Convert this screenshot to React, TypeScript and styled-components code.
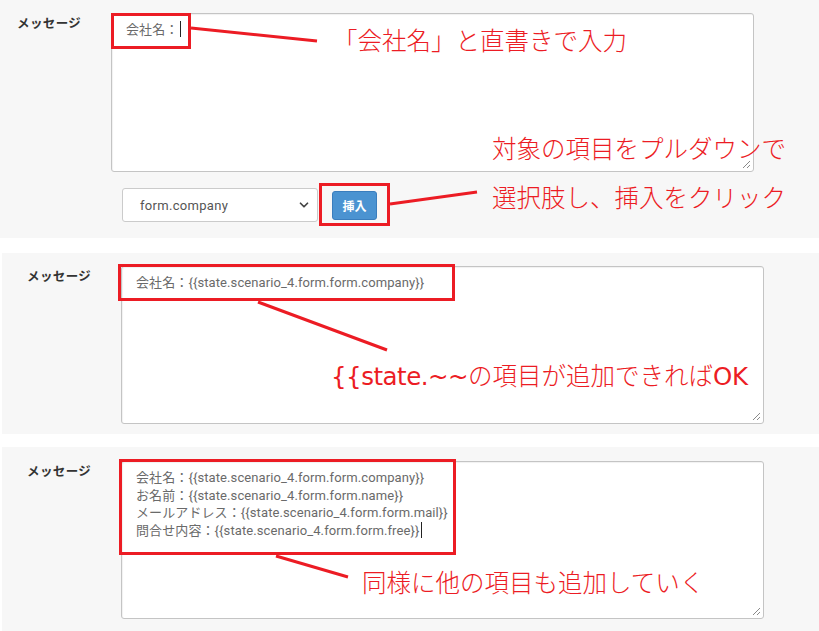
import styled, { createGlobalStyle } from "styled-components";
import { ChevronDown } from "lucide-react";

const GlobalStyle = createGlobalStyle`
  body {
    margin: 0;
    background: #fff;
    font-family: Roboto, "Noto Sans CJK JP", sans-serif;
  }
`;

const RED = "#ec1c24";

const Page = styled.div`
  position: relative;
  width: 819px;
  height: 631px;
  overflow: hidden;
  display: flex;
  flex-direction: column;
`;

const Panel = styled.section<{ $indent: number; $gap: number; $top: number; $bottom: number; $pad: number }>`
  display: flex;
  background: #f7f7f7;
  margin-left: ${(p) => p.$indent}px;
  margin-top: ${(p) => p.$gap}px;
  padding: ${(p) => p.$top}px 0 ${(p) => p.$bottom}px ${(p) => p.$pad}px;
  flex-shrink: 0;
`;

const Label = styled.div`
  width: 94px;
  flex-shrink: 0;
  font-family: "Noto Sans CJK JP", sans-serif;
  font-size: 12.5px;
  font-weight: 700;
  line-height: 20px;
  color: #333;
  letter-spacing: 0.4px;
`;

const Field = styled.div`
  display: flex;
  flex-direction: column;
`;

const MessageBox = styled.div<{ $height: number }>`
  position: relative;
  box-sizing: border-box;
  width: 643px;
  height: ${(p) => p.$height}px;
  background: #fff;
  border: 1px solid #c4c4c4;
  border-radius: 3px;
  box-shadow: inset 1px 1px 1px rgba(0, 0, 0, 0.06);
  padding: 7px 14px;
  font-size: 13px;
  line-height: 17.5px;
  letter-spacing: 0.1px;
  color: #6a6a6a;
  white-space: pre;
`;

const Caret = styled.span`
  display: inline-block;
  width: 1px;
  height: 16px;
  margin-left: 2px;
  vertical-align: -3px;
  background: #222;
`;

const Grip = styled.svg`
  position: absolute;
  right: 2px;
  bottom: 2px;
`;

const Controls = styled.div`
  display: flex;
  align-items: center;
  gap: 14px;
  margin-top: 16px;
  padding-left: 11px;
`;

const SelectBox = styled.div`
  box-sizing: border-box;
  width: 196px;
  height: 34px;
  display: flex;
  align-items: center;
  justify-content: space-between;
  padding: 0 6px 0 17px;
  background: #fff;
  border: 1px solid #cbcbcb;
  border-radius: 3px;
  font-size: 13px;
  letter-spacing: 0.3px;
  color: #555;
`;

const InsertButton = styled.button`
  width: 45px;
  height: 29px;
  padding: 0;
  background: #4b93d1;
  border: 1px solid #3a7dbd;
  border-radius: 3px;
  color: #fff;
  font-family: "Noto Sans CJK JP", sans-serif;
  font-size: 12px;
  font-weight: 700;
`;

const RedBox = styled.div<{ $x: number; $y: number; $w: number; $h: number }>`
  position: absolute;
  box-sizing: border-box;
  left: ${(p) => p.$x}px;
  top: ${(p) => p.$y}px;
  width: ${(p) => p.$w}px;
  height: ${(p) => p.$h}px;
  border: 3px solid ${RED};
`;

const Note = styled.div<{ $x: number; $y: number }>`
  position: absolute;
  left: ${(p) => p.$x}px;
  top: ${(p) => p.$y}px;
  font-family: "Noto Sans CJK JP", sans-serif;
  font-size: 24.5px;
  font-weight: 300;
  line-height: 24px;
  color: ${RED};
  white-space: nowrap;
`;

// 英字部分は通常の太さ
const Latin = styled.span`
  font-family: "DejaVu Sans", sans-serif;
  font-weight: 400;
  letter-spacing: -0.5px;
`;

const Lines = styled.svg`
  position: absolute;
  left: 0;
  top: 0;
  pointer-events: none;
`;

const ResizeGrip = () => (
  <Grip width="9" height="9" viewBox="0 0 9 9">
    <line x1="1" y1="8" x2="8" y2="1" stroke="#8a8a8a" strokeWidth="1" />
    <line x1="5" y1="8" x2="8" y2="5" stroke="#8a8a8a" strokeWidth="1" />
  </Grip>
);

const company = "会社名：{{state.scenario_4.form.form.company}}";

export default function App() {
  return (
    <Page>
      <GlobalStyle />

      <Panel $indent={0} $gap={0} $top={13} $bottom={16} $pad={17}>
        <Label>メッセージ</Label>
        <Field>
          <MessageBox $height={159}>
            会社名：<Caret />
            <ResizeGrip />
          </MessageBox>
          <Controls>
            <SelectBox>
              form.company
              <ChevronDown size={14} strokeWidth={3} color="#444" />
            </SelectBox>
            <InsertButton>挿入</InsertButton>
          </Controls>
        </Field>
      </Panel>

      <Panel $indent={2} $gap={15} $top={13} $bottom={10} $pad={25}>
        <Label>メッセージ</Label>
        <Field>
          <MessageBox $height={158}>
            {company}
            <ResizeGrip />
          </MessageBox>
        </Field>
      </Panel>

      <Panel $indent={2} $gap={13} $top={14} $bottom={20} $pad={25}>
        <Label>メッセージ</Label>
        <Field>
          <MessageBox $height={158}>
            {company + "\n"}
            {"お名前：{{state.scenario_4.form.form.name}}\n"}
            {"メールアドレス：{{state.scenario_4.form.form.mail}}\n"}
            {"問合せ内容：{{state.scenario_4.form.form.free}}"}
            <Caret />
            <ResizeGrip />
          </MessageBox>
        </Field>
      </Panel>

      {/* 注釈 */}
      <RedBox $x={111} $y={13} $w={80} $h={36} />
      <RedBox $x={319} $y={183} $w={71} $h={43} />
      <RedBox $x={118} $y={264} $w={337} $h={37} />
      <RedBox $x={119} $y={459} $w={337} $h={96} />

      <Lines width="819" height="631">
        <line x1="191" y1="28" x2="317" y2="41" stroke={RED} strokeWidth="3" />
        <line x1="390" y1="204" x2="477" y2="192" stroke={RED} strokeWidth="3" />
        <line x1="258" y1="302" x2="387" y2="350" stroke={RED} strokeWidth="3" />
        <line x1="276" y1="556" x2="348" y2="577" stroke={RED} strokeWidth="3" />
      </Lines>

      <Note $x={333} $y={28}>「会社名」と直書きで入力</Note>
      <Note $x={492} $y={136}>対象の項目をプルダウンで</Note>
      <Note $x={492} $y={185}>選択肢し、挿入をクリック</Note>
      <Note $x={331} $y={363}>
        <Latin>{"{{state.~~"}</Latin>の項目が追加できれば<Latin>OK</Latin>
      </Note>
      <Note $x={362} $y={570}>同様に他の項目も追加していく</Note>
    </Page>
  );
}
